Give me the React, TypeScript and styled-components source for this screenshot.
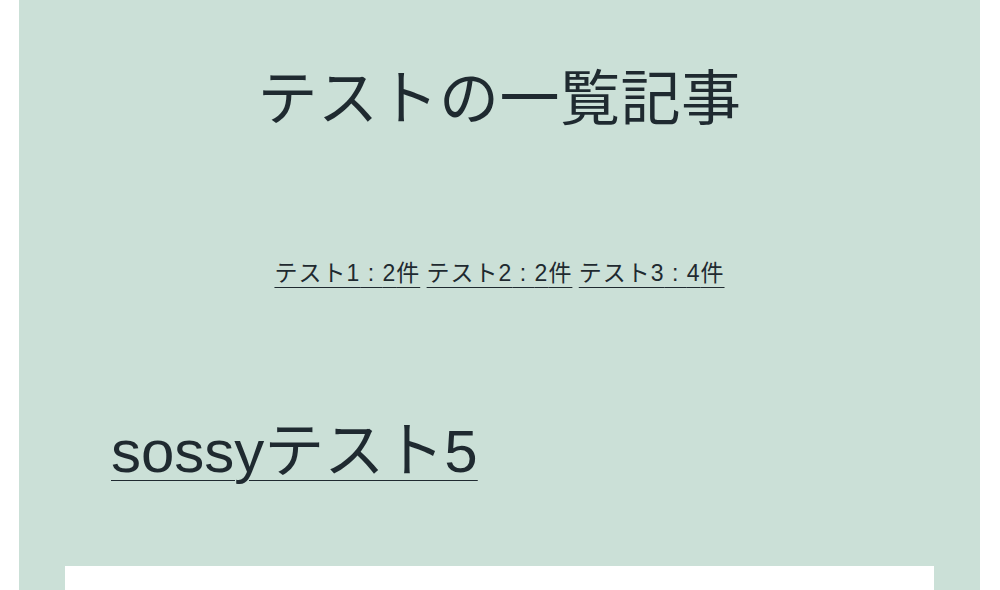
import * as React from "react";
import styled, { createGlobalStyle } from "styled-components";

const GlobalStyle = createGlobalStyle`
  html, body {
    margin: 0;
    padding: 0;
    background: #ffffff;
  }
  body {
    font-family: "Liberation Sans", "Noto Sans CJK JP", sans-serif;
    color: #1f2a30;
  }
`;

type Category = {
  name: string;
  count: number;
};

const categories: Category[] = [
  { name: "テスト1", count: 2 },
  { name: "テスト2", count: 2 },
  { name: "テスト3", count: 4 },
];

const Page = styled.div`
  margin: 0 20px 0 19px;
  height: 590px;
  background: #cbe0d7;
  padding-top: 64px;
  box-sizing: border-box;
  overflow: hidden;
`;

const Title = styled.h1`
  margin: 0;
  text-align: center;
  font-weight: 400;
  font-size: 60px;
  line-height: 72px;
  letter-spacing: 0.5px;
`;

const CategoryNav = styled.nav`
  margin-top: 122px;
  text-align: center;
  font-size: 23px;
  line-height: 30px;
`;

const CategoryLink = styled.a`
  color: inherit;
  letter-spacing: 1px;
  text-decoration: underline;
  text-decoration-thickness: 1px;
  text-underline-offset: 6px;
`;

const Articles = styled.section`
  margin-top: 128px;
  padding-left: 92px;
`;

const ArticleTitle = styled.a`
  display: inline-block;
  color: inherit;
  font-size: 60px;
  line-height: 72px;
  text-decoration: underline;
  text-decoration-thickness: 1px;
  text-underline-offset: 8px;
`;

const Card = styled.div`
  margin: 78px 46px 0;
  height: 200px;
  background: #ffffff;
`;

export default function App() {
  return (
    <>
      <GlobalStyle />
      <Page>
        <Title>テストの一覧記事</Title>
        <CategoryNav>
          {categories.map((c, i) => (
            <React.Fragment key={c.name}>
              {i > 0 && " "}
              <CategoryLink href="#">
                {c.name} : {c.count}件
              </CategoryLink>
            </React.Fragment>
          ))}
        </CategoryNav>
        <Articles>
          <ArticleTitle href="#">sossyテスト5</ArticleTitle>
        </Articles>
        <Card />
      </Page>
    </>
  );
}
